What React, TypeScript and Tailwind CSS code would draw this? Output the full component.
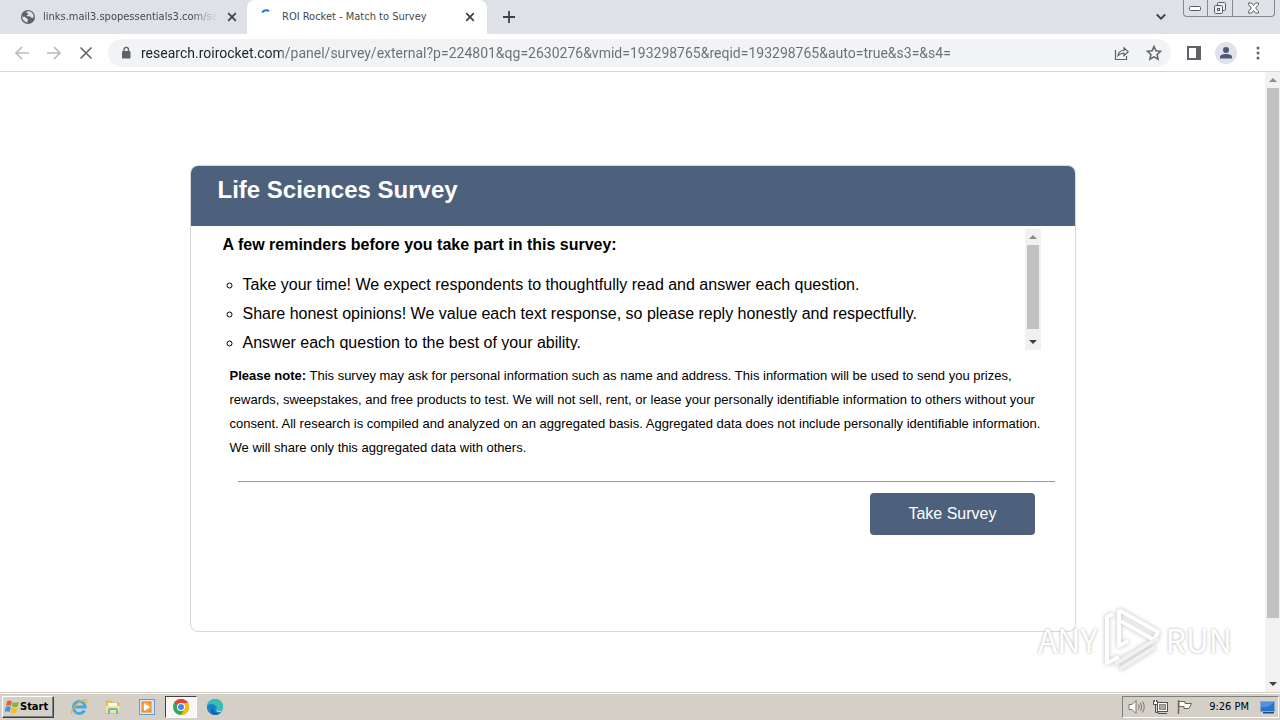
import type { ReactNode } from "react";

const uiFont = "font-['DejaVu_Sans_Condensed','DejaVu_Sans',sans-serif]";

const reminders = [
  "Take your time! We expect respondents to thoughtfully read and answer each question.",
  "Share honest opinions! We value each text response, so please reply honestly and respectfully.",
  "Answer each question to the best of your ability.",
];

interface IconButtonProps {
  label: string;
  className?: string;
  children: ReactNode;
}

const IconButton = ({ label, className = "", children }: IconButtonProps) => (
  <button
    type="button"
    aria-label={label}
    className={`flex shrink-0 items-center justify-center ${className}`}
  >
    {children}
  </button>
);

const CloseIcon = () => (
  <svg width="10" height="10" viewBox="0 0 10 10" stroke="#3c4043" strokeWidth="1.7">
    <path d="M1.2 1.2l7.6 7.6M8.8 1.2L1.2 8.8" />
  </svg>
);

const ScrollBar = ({ thumb, className }: { thumb: string; className: string }) => (
  <div className={`flex shrink-0 flex-col items-center bg-[#f1f1f1] ${className}`}>
    <svg className="my-1 shrink-0" width="8" height="8" viewBox="0 0 8 8">
      <path d="M0 6h8L4 2z" fill="#8b8b8b" />
    </svg>
    <div className={`w-3 bg-[#c1c1c1] ${thumb}`} />
    <svg className="mt-auto mb-1 shrink-0" width="8" height="8" viewBox="0 0 8 8">
      <path d="M0 2h8L4 6z" fill="#404040" />
    </svg>
  </div>
);

const TabStrip = () => (
  <div className={`flex h-[34px] bg-[#dee1e6] text-[11px] text-[#45484c] ${uiFont}`}>
    <div className="flex w-[247px] items-center pl-[21px]">
      <svg className="shrink-0" width="14" height="14" viewBox="0 0 14 14">
        <circle cx="7" cy="7" r="7" fill="#5f6368" />
        <path
          d="M1.2 6.5c2 .2 3.2.3 3.9 1.4.6 1 2 .5 2 1.7 0 1-.8 1.3-.8 2.9C3.5 12.2 1.2 9.5 1.2 6.5zM5 1.9c.5 1.3 2 .7 2.2 1.8.1.9-1.5 1-1.4 2.1.1.8 1.4.5 2.5.5 1.3 0 1.5 1.5 2.7 1.6.8 0 1.1-.5 1.7-.7C12.9 4 10.5 1.3 7.3 1.3 6.4 1.3 5.7 1.5 5 1.9z"
          fill="#dee1e6"
        />
      </svg>
      <span className="ml-2 w-[174px] overflow-hidden whitespace-nowrap mask-r-from-85%">
        links.mail3.spopessentials3.com/serv
      </span>
      <IconButton label="Close tab" className="ml-[10px]">
        <CloseIcon />
      </IconButton>
    </div>
    <div className="flex w-60 items-center rounded-t-lg bg-white pl-3">
      <svg className="shrink-0" width="16" height="16" viewBox="0 0 16 16" fill="none">
        <path d="M3 3.3C5 1.2 8 .9 10.2 2" stroke="#1a73e8" strokeWidth="1.8" />
      </svg>
      <span className="ml-[7px] flex-1 whitespace-nowrap">ROI Rocket - Match to Survey</span>
      <IconButton label="Close tab" className="mr-3">
        <CloseIcon />
      </IconButton>
    </div>
    <IconButton label="New tab" className="ml-4">
      <svg width="12" height="12" viewBox="0 0 12 12" stroke="#3c4043" strokeWidth="1.8">
        <path d="M6 0v12M0 6h12" />
      </svg>
    </IconButton>
    <IconButton label="Search tabs" className="ml-auto">
      <svg width="10" height="8" viewBox="0 0 10 8" fill="none" stroke="#3c4043" strokeWidth="1.8">
        <path d="M.8 1.5L5 5.7l4.2-4.2" />
      </svg>
    </IconButton>
    <div className="mr-[5px] ml-[17px] flex h-[17px] rounded-b border border-t-0 border-[#85888d]">
      <IconButton label="Minimize" className="w-6 border-r border-[#85888d]">
        <svg width="13" height="5" viewBox="0 0 13 5">
          <rect x=".5" y=".5" width="11" height="4" rx="1" fill="#fff" stroke="#5a5d63" />
        </svg>
      </IconButton>
      <IconButton label="Restore" className="w-[25px] border-r border-[#85888d]">
        <svg width="14" height="14" viewBox="0 0 14 14" fill="#eceef1" stroke="#5a5d63">
          <rect x="4.5" y="1.5" width="8" height="8" rx="1" />
          <rect x="1.5" y="4.5" width="8" height="8" rx="1" />
          <rect x="4.5" y="7.5" width="2" height="2" />
        </svg>
      </IconButton>
      <IconButton label="Close" className="w-[41px]">
        <svg width="13" height="12" viewBox="0 0 13 12">
          <path
            d="M1.5 1h3l2 2.5 2-2.5h3v1.5L8.7 6l2.8 3.5V11h-3l-2-2.5-2 2.5h-3V9.5L4.3 6 1.5 2.5z"
            fill="#fff"
            stroke="#5a5d63"
          />
        </svg>
      </IconButton>
    </div>
  </div>
);

const Toolbar = () => (
  <div className="flex h-[38px] items-center border-b border-[#d6d8db] bg-white pl-[14px]">
    <IconButton label="Back">
      <svg width="16" height="16" viewBox="0 0 16 16" fill="none" stroke="#b8babd" strokeWidth="1.6">
        <path d="M15 8H2M8 2L2 8l6 6" />
      </svg>
    </IconButton>
    <IconButton label="Forward" className="ml-4">
      <svg width="16" height="16" viewBox="0 0 16 16" fill="none" stroke="#b8babd" strokeWidth="1.6">
        <path d="M1 8h13M8 2l6 6-6 6" />
      </svg>
    </IconButton>
    <IconButton label="Stop" className="ml-4">
      <svg width="16" height="16" viewBox="0 0 16 16" stroke="#5f6368" strokeWidth="1.6">
        <path d="M2.5 2.5l11 11M13.5 2.5l-11 11" />
      </svg>
    </IconButton>
    <div className="ml-[14px] flex h-7 flex-1 items-center rounded-full bg-[#f1f3f4] pr-2 pl-3">
      <svg className="shrink-0" width="12" height="14" viewBox="0 0 12 14">
        <rect x="2" y="5" width="8.5" height="7.5" rx="1" fill="#5f6368" />
        <path d="M4 5.500V3.700a2.250 2.250 0 014.500 0v1.800" fill="none" stroke="#5f6368" strokeWidth="1.3" />
      </svg>
      {/* host is drawn darker than the rest of the address */}
      <input
        type="text"
        aria-label="Address"
        defaultValue="research.roirocket.com/panel/survey/external?p=224801&qg=2630276&vmid=193298765&reqid=193298765&auto=true&s3=&s4="
        className="ml-[9px] h-6 min-w-0 flex-1 bg-linear-to-r from-[#202124] from-[141px] to-[#6a6d72] to-[141px] bg-clip-text font-['Roboto','Noto_Sans',sans-serif] text-sm text-transparent outline-none"
      />
      <IconButton label="Share this page">
        <svg width="18" height="16" viewBox="0 0 18 16" fill="none" stroke="#5f6368" strokeWidth="1.2">
          <path d="M2.5 5v9.500h11V11" />
          <path d="M5 10.500c.4-3 2.500-5 6-5V2.800l4.200 3.900-4.200 3.900V8.100c-2.600 0-4.300.7-6 2.400z" />
        </svg>
      </IconButton>
      <IconButton label="Bookmark this tab" className="ml-[14px]">
        <svg width="18" height="16" viewBox="0 0 18 16" fill="none" stroke="#5f6368" strokeWidth="1.5">
          <path d="M9 1.500l1.900 4.300 4.700.5-3.500 3.200 1 4.700L9 11.800l-4.100 2.400 1-4.700-3.500-3.200 4.700-.5z" />
        </svg>
      </IconButton>
    </div>
    <IconButton label="Side panel" className="ml-4">
      <svg width="14" height="14" viewBox="0 0 14 14">
        <path d="M0 0h14v14H0zM2 2v10h7V2z" fill="#5f6368" fillRule="evenodd" />
      </svg>
    </IconButton>
    <IconButton label="Profile" className="ml-[14px] size-[22px] rounded-full bg-[#dfe2e8]">
      <svg width="14" height="14" viewBox="0 0 14 14" fill="#4c5978">
        <circle cx="7" cy="4" r="3" />
        <path d="M1 12.500V11c0-2.200 3.500-3 6-3s6 .8 6 3v1.500z" />
      </svg>
    </IconButton>
    <IconButton label="Menu" className="mr-5 ml-[19px]">
      <svg width="4" height="14" viewBox="0 0 4 14" fill="#5f6368">
        <circle cx="2" cy="2" r="1.5" />
        <circle cx="2" cy="7" r="1.5" />
        <circle cx="2" cy="12" r="1.5" />
      </svg>
    </IconButton>
  </div>
);

const SurveyCard = () => (
  <section className="w-full max-w-[886px] overflow-hidden rounded-lg border border-[#d8d8d8] pb-24">
    <h1 className="h-[60px] bg-[#4d617c] pt-2 pl-[27px] text-2xl font-bold text-white">
      Life Sciences Survey
    </h1>
    <div className="mt-[3px] mr-[34px] ml-8 flex h-[121px] overflow-hidden">
      <div className="flex-1">
        <p className="mt-1 text-base font-bold">A few reminders before you take part in this survey:</p>
        <ul className="mt-[13px] ml-5 list-[circle] text-base leading-[29px]">
          {reminders.map((text) => (
            <li key={text}>{text}</li>
          ))}
        </ul>
      </div>
      <ScrollBar className="w-4" thumb="h-[84px]" />
    </div>
    <p className="mt-[14px] mr-[30px] ml-[39px] text-[13px] leading-6">
      <b>Please note:</b> This survey may ask for personal information such as name and address.
      This information will be used to send you prizes, rewards, sweepstakes, and free products to
      test. We will not sell, rent, or lease your personally identifiable information to others
      without your consent. All research is compiled and analyzed on an aggregated basis.
      Aggregated data does not include personally identifiable information. We will share only this
      aggregated data with others.
    </p>
    <hr className="mt-[21px] mr-5 ml-[47px] border-[#999]" />
    <div className="mt-[11px] mr-10 flex justify-end">
      <button type="button" className="h-[42px] rounded bg-[#4d617c] px-[38px] text-base text-white">
        Take Survey
      </button>
    </div>
  </section>
);

const Watermark = () => (
  <div className="pointer-events-none absolute right-12 bottom-5 flex items-center gap-1 font-['Noto_Sans_CJK_SC',sans-serif] text-[32px] leading-none text-white [text-shadow:0_0_3px_#aaa]">
    <span>ANY</span>
    <svg
      width="60"
      height="66"
      viewBox="0 0 60 66"
      fill="none"
      stroke="#fff"
      strokeWidth="4"
      strokeLinejoin="round"
      className="drop-shadow-[0_0_2px_#bbb]"
    >
      <path d="M18 4v36l9-5M18 4l39 22-4 8-33-19" />
      <path d="M12 8l-6 3v46l12-6" />
      <path d="M14 58l43-26M19 63l35-22" stroke="#f1f1f1" />
    </svg>
    <span>RUN</span>
  </div>
);

const ExplorerIcon = () => (
  <svg width="18" height="18" viewBox="0 0 18 18" fill="none">
    <path d="M14.500 12.500a6 6 0 11.800-3.500H4" stroke="#45a9df" strokeWidth="2.8" />
    <path d="M2 16C-1 12 11 1 16 2c2 .5 0 3-1 4" stroke="#e9b53c" strokeWidth="1.3" />
  </svg>
);

const FolderIcon = () => (
  <svg width="18" height="18" viewBox="0 0 18 18">
    <path d="M2 3h5l1 2h7v10H2z" fill="#e5c566" stroke="#c7a54a" strokeWidth=".6" />
    <path d="M4 5h9v5H4z" fill="#fff8d8" />
    <path d="M1 8h15l-1 7H2z" fill="#f6e39a" />
    <path d="M4 16v-4q0-2 2-2h6q2 0 2 2v4h-2v-4H6v4z" fill="#65b5d9" />
  </svg>
);

const PlayerIcon = () => (
  <svg width="18" height="18" viewBox="0 0 18 18">
    <rect x="1.5" y="1.5" width="15" height="15" fill="#d3e6f5" stroke="#6c9cc5" />
    <rect x="3.5" y="3.5" width="10" height="11" fill="#f08a1d" />
    <circle cx="8.5" cy="9" r="4.5" fill="#f7a745" />
    <path d="M6 5l6 4-6 4z" fill="#fff" />
  </svg>
);

const ChromeIcon = () => (
  <svg width="16" height="16" viewBox="0 0 16 16">
    <circle cx="8" cy="8" r="8" fill="#34a853" />
    <path d="M8 8L1.100 4A8 8 0 0114.900 4z" fill="#ea4335" />
    <path d="M8 4h6.900A8 8 0 018 16l3.500-6z" fill="#fbbc05" />
    <circle cx="8" cy="8" r="4" fill="#fff" />
    <circle cx="8" cy="8" r="3" fill="#4285f4" />
  </svg>
);

const EdgeIcon = () => (
  <svg width="16" height="16" viewBox="0 0 16 16">
    <circle cx="8" cy="8" r="8" fill="#1683cf" />
    <path d="M0 8a8 8 0 0116 0c0 3-2.500 4-5 4-2 0-2-1-1.500-2C10.500 7.500 8 5.500 5.500 5.500 2.500 5.500.5 6.500 0 8z" fill="#35bfb5" />
    <path d="M0 8C.5 5 4 4.500 6 5.500 3 7 3 12 7 15.900A8 8 0 010 8z" fill="#1683cf" />
    <path d="M6.500 8C5 10 7 14 10.500 14c1.500 0 3-.5 4-1.500C12 16.500 6 17 4.500 13.500 3.500 11 4.500 8.500 6.500 8z" fill="#1b5cab" />
    <path d="M9.500 10c-.6 1.300.5 2 2 2 1.500 0 3-.3 4-1.500-.5 1.500-1.500 2.500-3 2.700-2 .3-4-1.200-3-3.200z" fill="#d4d0c8" />
  </svg>
);

const apps = [
  { name: "Internet Explorer", icon: <ExplorerIcon />, active: false },
  { name: "File Explorer", icon: <FolderIcon />, active: false },
  { name: "Media Player", icon: <PlayerIcon />, active: false },
  { name: "Chrome", icon: <ChromeIcon />, active: true },
  { name: "Edge", icon: <EdgeIcon />, active: false },
];

const Taskbar = () => (
  <footer
    className={`flex h-7 shrink-0 items-center border-t border-[#d4d0c8] bg-[#d4d0c8] pt-px pr-px pl-[2px] text-[11px] text-black shadow-[inset_0_1px_0_#fff] ${uiFont}`}
  >
    <button
      type="button"
      className="flex h-[22px] w-[52px] items-center border border-t-white border-r-[#404040] border-b-[#404040] border-l-white pl-px font-bold shadow-[inset_-1px_-1px_0_#808080]"
    >
      <svg width="16" height="16" viewBox="0 0 16 16" className="shrink-0">
        <path d="M3 2.500c2-1.500 3.500-1 5 0L7 7C5.500 6 4 6 2 7z" fill="#e8602c" />
        <path d="M9 3c2 1 3.500 1 6 0L13.500 7.500c-2 1-3.500 1-5.500 0z" fill="#79b83e" />
        <path d="M1.700 8c2-1 3.500-1 5 0l-1 5c-1.500-1-3-1-5 0z" fill="#3f93d6" />
        <path d="M7.700 8.500c2 1 3.500 1 5.500 0l-1 5c-2 1-3.500 1-5.500 0z" fill="#f4bd27" />
      </svg>
      Start
    </button>
    <nav className="ml-[9px] flex gap-[2px]">
      {apps.map(({ name, icon, active }) => (
        <IconButton
          key={name}
          label={name}
          className={
            active
              ? "h-[22px] w-8 border border-t-[#404040] border-r-white border-b-white border-l-[#404040] bg-[#f8f7f5]"
              : "h-[22px] w-8"
          }
        >
          {icon}
        </IconButton>
      ))}
    </nav>
    <div className="ml-auto flex h-[22px] items-center border border-t-[#808080] border-r-white border-b-white border-l-[#808080] pr-[2px] pl-[5px]">
      <svg width="17" height="16" viewBox="0 0 17 16" fill="none" stroke="#77756f">
        <path d="M1 5.500h3l4-4v13l-4-4H1z" fill="#fff" />
        <path d="M10.500 5.500q1.500 2.500 0 5M12.500 4q2.500 4 0 8M14.500 2.500q3.500 5.500 0 11" />
      </svg>
      <svg className="ml-[7px]" width="17" height="16" viewBox="0 0 17 16" fill="none" stroke="#55534e">
        <rect x="5.5" y="3.5" width="10" height="9" fill="#fff" />
        <rect x="7.5" y="5.5" width="6" height="5" fill="#aaa8a1" stroke="#8b8982" />
        <path d="M6 14.500h9M3.500 6v7.500h3" />
        <path d="M1.500 1.500v4h4v-4M2.500 1v2M4.500 1v2" fill="#fff" />
      </svg>
      <svg className="ml-[7px]" width="17" height="16" viewBox="0 0 17 16" stroke="#66645f">
        <path d="M2.500 1v14" strokeWidth="1.4" />
        <path d="M3 2.500h6v2h6.500l-2.500 5H8v-2H3z" fill="#fff" />
      </svg>
      <time className="ml-4 whitespace-nowrap">9:26 PM</time>
      <svg className="ml-[10px]" width="17" height="16" viewBox="0 0 17 16">
        <rect x="1.5" y="2.5" width="14" height="10" fill="#2874c9" stroke="#8aa9cb" />
        <path d="M2 8c6 1 9-1 13-5H2z" fill="#4a93de" />
        <path d="M4 13h11v1.500H4z" fill="#174b91" />
      </svg>
    </div>
  </footer>
);

export default function App() {
  return (
    <div className="flex h-screen flex-col overflow-hidden bg-white font-['Liberation_Sans',Arial,sans-serif] text-black">
      <header className="shrink-0">
        <TabStrip />
        <Toolbar />
      </header>
      <div className="relative flex min-h-0 flex-1">
        <main className="flex flex-1 items-start justify-center pt-[93px]">
          <SurveyCard />
        </main>
        <ScrollBar className="w-[15px]" thumb="h-[530px]" />
        <Watermark />
      </div>
      <Taskbar />
    </div>
  );
}
